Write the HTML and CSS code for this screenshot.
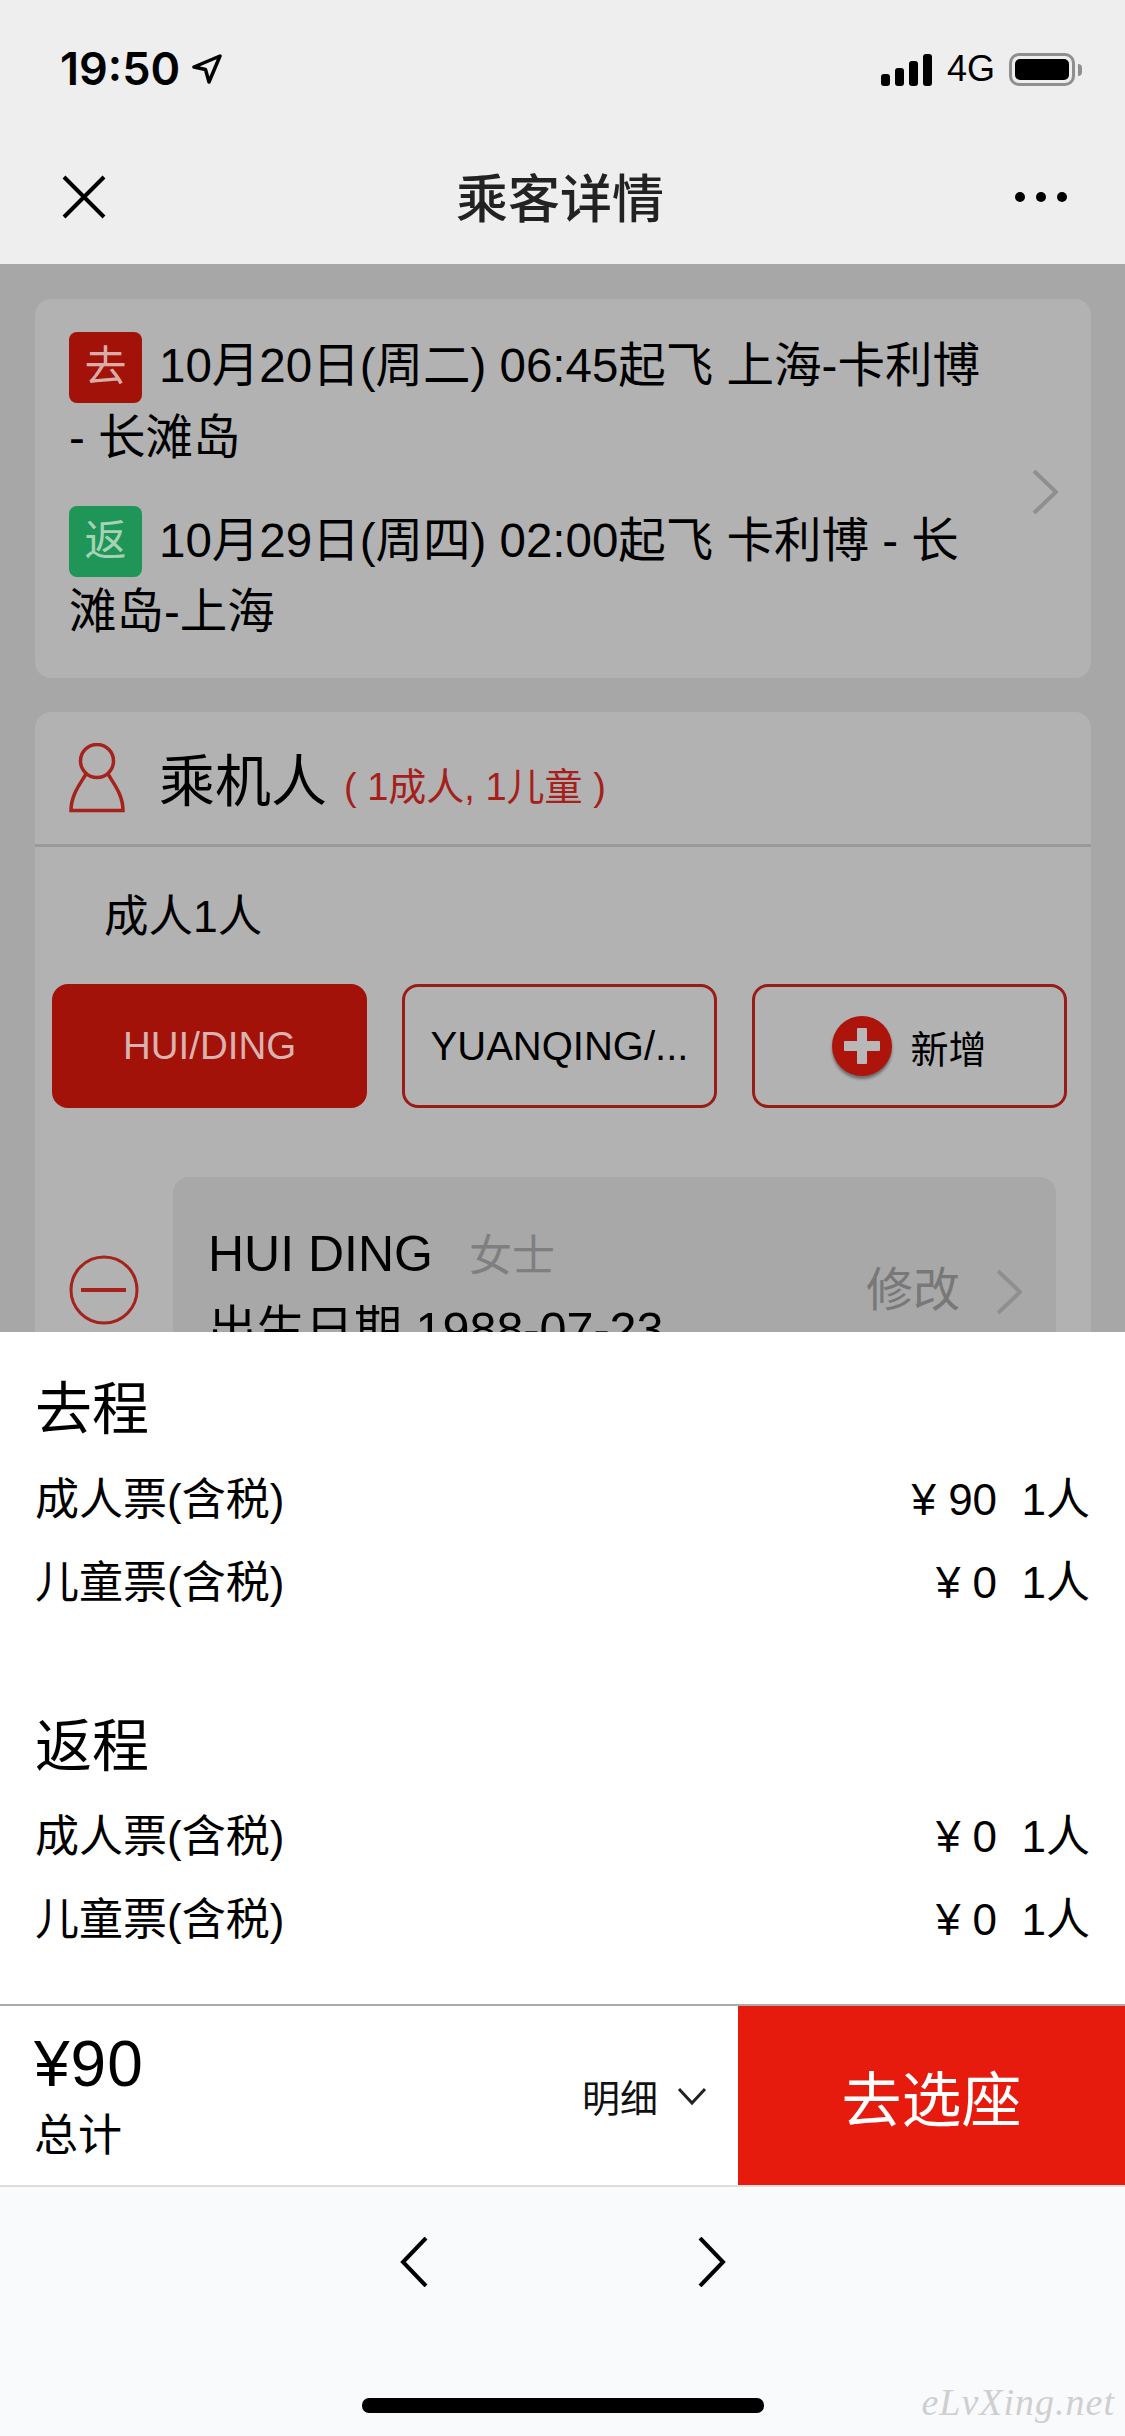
FILE: index.html
```html
<!DOCTYPE html>
<html lang="zh-CN">
<head>
  <meta charset="UTF-8">
  <meta name="viewport" content="width=device-width, initial-scale=1.0">
  <title>乘客详情</title>
  <link rel="stylesheet" href="styles.css">
</head>
<body>
  <div class="page">
    <!-- 状态栏和标题 -->
    <header class="top">
      <div class="status">
        <div class="status-left">
          <span class="time">19:50</span>
          <svg class="arrow" width="30" height="30" viewBox="0 0 30 30"><path d="M28 2 L2 13 L13.500 15.500 L17 28 Z" fill="none" stroke="#000" stroke-width="3.500" stroke-linejoin="round"/></svg>
        </div>
        <div class="status-right">
          <div class="signal"><i class="b1"></i><i class="b2"></i><i class="b3"></i><i class="b4"></i></div>
          <span class="net">4G</span>
          <div class="battery"><div class="battery-fill"></div></div>
          <div class="battery-nub"></div>
        </div>
      </div>
      <div class="nav">
        <svg class="close" width="44" height="44" viewBox="0 0 44 44"><path d="M2 2 L42 42 M42 2 L2 42" stroke="#000" stroke-width="4" fill="none"/></svg>
        <h1 class="title">乘客详情</h1>
        <div class="dots"><i></i><i></i><i></i></div>
      </div>
    </header>

    <!-- 遮罩下面的内容 -->
    <main class="dimmed">
      <section class="card trip">
        <div class="trip-text">
          <p><span class="tag tag-go">去</span>10月20日(周二) 06:45起飞 上海-卡利博<br>- 长滩岛</p>
          <p><span class="tag tag-back">返</span>10月29日(周四) 02:00起飞 卡利博 - 长<br>滩岛-上海</p>
        </div>
        <svg class="chev-grey trip-chev" width="26" height="44" viewBox="0 0 26 44"><path d="M2 1 L24 22 L2 43" fill="none" stroke="#8f8f8f" stroke-width="4"/></svg>
      </section>

      <section class="card people">
        <div class="people-head">
          <svg class="person" width="56" height="70" viewBox="0 0 56 70"><circle cx="28" cy="18" r="16.500" fill="none" stroke="#a5231c" stroke-width="3.500"/><path d="M17 31 C11 41 2 52 2 67.500 L54 67.500 C54 52 45 41 39 31" fill="none" stroke="#a5231c" stroke-width="3.500"/></svg>
          <h2 class="people-title">乘机人</h2>
          <span class="people-count">( 1成人, 1儿童 )</span>
        </div>
        <div class="adult-label">成人1人</div>
        <div class="picks">
          <div class="pick pick-on">HUI/DING</div>
          <div class="pick">YUANQING/...</div>
          <div class="pick pick-add"><span class="plus"></span>新增</div>
        </div>
        <div class="person-row">
          <svg class="minus" width="70" height="70" viewBox="0 0 70 70"><circle cx="35" cy="35" r="33" fill="none" stroke="#a5231c" stroke-width="3"/><path d="M12 35 L57 35" stroke="#a5231c" stroke-width="4"/></svg>
          <div class="person-box">
            <div class="person-info">
              <div class="person-name">HUI DING <span class="person-sex">女士</span></div>
              <div class="person-birth">出生日期 1988-07-23</div>
            </div>
            <span class="edit">修改</span>
            <svg class="chev-grey" width="26" height="44" viewBox="0 0 26 44"><path d="M2 1 L24 22 L2 43" fill="none" stroke="#8f8f8f" stroke-width="4"/></svg>
          </div>
        </div>
      </section>
    </main>

    <!-- 价格明细 -->
    <section class="sheet">
      <div class="fare-group">
        <h3>去程</h3>
        <div class="fare-row"><span>成人票(含税)</span><span>¥ 90&nbsp;&nbsp;1人</span></div>
        <div class="fare-row"><span>儿童票(含税)</span><span>¥ 0&nbsp;&nbsp;1人</span></div>
      </div>
      <div class="fare-group">
        <h3>返程</h3>
        <div class="fare-row"><span>成人票(含税)</span><span>¥ 0&nbsp;&nbsp;1人</span></div>
        <div class="fare-row"><span>儿童票(含税)</span><span>¥ 0&nbsp;&nbsp;1人</span></div>
      </div>
    </section>

    <section class="total-bar">
      <div class="total">
        <div class="total-price">¥90</div>
        <div class="total-label">总计</div>
      </div>
      <div class="detail">明细
        <svg width="30" height="20" viewBox="0 0 30 20"><path d="M2 3 L15 17 L28 3" fill="none" stroke="#222" stroke-width="3"/></svg>
      </div>
      <button class="go-btn" type="button">去选座</button>
    </section>

    <!-- 浏览器工具栏 -->
    <footer class="toolbar">
      <div class="toolbar-nav">
        <svg width="30" height="50" viewBox="0 0 30 50"><path d="M27 1 L4 25 L27 49" fill="none" stroke="#000" stroke-width="4"/></svg>
        <svg width="30" height="50" viewBox="0 0 30 50"><path d="M3 1 L26 25 L3 49" fill="none" stroke="#000" stroke-width="4"/></svg>
      </div>
      <div class="home-bar"></div>
      <span class="watermark">eLvXing.net</span>
    </footer>
  </div>
</body>
</html>
```

FILE: styles.css
```css
* {
  box-sizing: border-box;
}

body {
  margin: 0;
  font-family: "Liberation Sans", "Noto Sans CJK SC", sans-serif;
  color: #000;
}

h1, h2, h3, p {
  margin: 0;
  font-weight: normal;
}

.page {
  width: 1125px;
  height: 2436px;
  display: flex;
  flex-direction: column;
  overflow: hidden;
}

/* top */
.top {
  height: 264px;
  background-color: #eeeeee;
}

.status {
  height: 132px;
  padding: 46px 43px 0 60px;
  display: flex;
  justify-content: space-between;
  align-items: flex-start;
}

.status-left {
  display: flex;
  align-items: center;
  gap: 12px;
}

.time {
  font-family: Inter, sans-serif;
  font-size: 45px;
  font-weight: 600;
  line-height: 46px;
}

.status-right {
  display: flex;
  align-items: flex-end;
  height: 40px;
}

.signal {
  display: flex;
  align-items: flex-end;
  gap: 5px;
  margin-right: 15px;
}

.signal i {
  display: block;
  width: 9px;
  background-color: #000;
  border-radius: 3px;
}

.b1 { height: 12px; }
.b2 { height: 18px; }
.b3 { height: 25px; }
.b4 { height: 32px; }

.net {
  font-size: 36px;
  line-height: 34px;
  margin-right: 14px;
}

.battery {
  width: 66px;
  height: 33px;
  border: 3px solid #8f8f8f;
  border-radius: 10px;
  padding: 3px;
}

.battery-fill {
  width: 100%;
  height: 100%;
  background-color: #000;
  border-radius: 5px;
}

.battery-nub {
  width: 4px;
  height: 12px;
  margin: 0 0 10px 3px;
  background-color: #8f8f8f;
  border-radius: 0 6px 6px 0;
}

.nav {
  height: 132px;
  padding: 0 58px 2px 62px;
  display: grid;
  grid-template-columns: 1fr auto 1fr;
  align-items: center;
}

.title {
  font-size: 52px;
  font-weight: 500;
  color: #222;
  margin: -4px 0 0 -9px;
}

.dots {
  display: flex;
  justify-content: flex-end;
  gap: 11px;
}

.dots i {
  display: block;
  width: 10px;
  height: 10px;
  background-color: #000;
  border-radius: 50%;
}

/* dimmed content */
.dimmed {
  height: 1068px;
  flex: none;
  overflow: hidden;
  background-color: #a7a7a7;
  padding: 35px 34px 0 35px;
}

.card {
  background-color: #b2b2b2;
  border-radius: 16px;
}

.trip {
  height: 379px;
  padding: 33px 33px 0 34px;
  display: flex;
  align-items: center;
  justify-content: space-between;
  margin-bottom: 34px;
}

.trip-text {
  margin-top: -32px;
  font-size: 47.500px;
  line-height: 70px;
}

.trip-text p + p {
  margin-top: 33px;
}

.tag {
  display: inline-block;
  width: 73px;
  height: 71px;
  margin: -4px 17px 0 0;
  border-radius: 8px;
  font-size: 42px;
  line-height: 70px;
  text-align: center;
  vertical-align: middle;
}

.tag-go {
  background-color: #a21208;
  color: #d9aca8;
}

.tag-back {
  background-color: #1f9657;
  color: #a6d3b8;
}

.trip-chev {
  margin-top: -26px;
}

.people-head {
  height: 135px;
  padding: 0 0 0 34px;
  display: flex;
  align-items: center;
  border-bottom: 3px solid #999;
}

.people-title {
  font-size: 56px;
  margin: -4px 17px 0 34px;
}

.people-count {
  font-size: 38px;
  color: #a5201a;
  margin-top: 10px;
}

.adult-label {
  font-size: 44.500px;
  line-height: 60px;
  padding: 40px 0 0 69px;
}

.picks {
  display: grid;
  grid-template-columns: repeat(3, 315px);
  gap: 35px;
  padding: 37px 0 0 17px;
}

.pick {
  height: 124px;
  border: 3px solid #981d16;
  border-radius: 16px;
  display: flex;
  align-items: center;
  justify-content: center;
  font-size: 40px;
}

.pick-on {
  background-color: #a21208;
  border-color: #a21208;
  color: #d9b3b0;
  font-size: 38.500px;
}

.pick-add {
  font-size: 38px;
  gap: 18px;
}

.plus {
  position: relative;
  width: 60px;
  height: 60px;
  background-color: #ad150c;
  border-radius: 50%;
  box-shadow: 0 3px 3px rgba(0, 0, 0, 0.4);
}

.plus::before,
.plus::after {
  content: "";
  position: absolute;
  background-color: #b8b8b8;
  border-radius: 1px;
}

.plus::before {
  left: 12px;
  top: 25px;
  width: 36px;
  height: 10px;
}

.plus::after {
  left: 25px;
  top: 12px;
  width: 10px;
  height: 36px;
}

.person-row {
  display: flex;
  align-items: flex-start;
  padding: 69px 0 0 34px;
}

.minus {
  margin: 78px 35px 0 0;
  flex: none;
}

.person-box {
  width: 883px;
  height: 220px;
  background-color: #a8a8a8;
  border-radius: 16px;
  padding: 47px 34px 0 35px;
  display: flex;
  margin-left: -1px;
}

.person-info {
  flex: 1;
}

.person-name {
  font-size: 50px;
  line-height: 60px;
}

.person-sex {
  font-size: 43px;
  color: #7f7f7f;
  margin-left: 22px;
}

.person-birth {
  font-size: 48.500px;
  line-height: 60px;
  margin-top: 13px;
}

.edit {
  font-size: 47px;
  color: #787878;
  margin: 36px 36px 0 0;
  line-height: 60px;
}

.person-box .chev-grey {
  margin-top: 46px;
}

/* fare sheet */
.sheet {
  flex: none;
  height: 674px;
  background-color: #fff;
  padding: 41px 35px 0;
  border-bottom: 2px solid #aaa;
}

.fare-group {
  height: 337px;
}

.fare-group h3 {
  font-size: 57px;
  line-height: 72px;
}

.fare-row {
  display: flex;
  justify-content: space-between;
  font-size: 44px;
  line-height: 60px;
  margin-bottom: 23px;
}

.fare-group h3 + .fare-row {
  margin-top: 25px;
}

.total-bar {
  flex: none;
  height: 181px;
  display: flex;
  background-color: #fff;
  border-bottom: 2px solid #ddd;
}

.total {
  flex: 1;
  padding: 22px 0 0 34px;
}

.total-price {
  font-size: 64px;
  line-height: 72px;
  letter-spacing: 1px;
}

.total-label {
  font-size: 44px;
  line-height: 56px;
  margin-top: 8px;
}

.detail {
  display: flex;
  align-items: center;
  gap: 19px;
  width: 156px;
  font-size: 38px;
  color: #111;
}

.go-btn {
  width: 387px;
  background-color: #e61b0e;
  color: #fff;
  border: none;
  font-family: inherit;
  font-size: 60px;
}

/* toolbar */
.toolbar {
  position: relative;
  flex: 1;
  background-color: #f9fafc;
}

.toolbar-nav {
  display: flex;
  justify-content: center;
  gap: 268px;
  padding-top: 50px;
}

.home-bar {
  width: 402px;
  height: 15px;
  margin: 111px 0 0 362px;
  background-color: #000;
  border-radius: 7px;
}

/* watermark over the toolbar */
.watermark {
  position: absolute;
  right: 10px;
  bottom: 12px;
  font-family: "Liberation Serif", serif;
  font-style: italic;
  font-size: 38px;
  letter-spacing: 1px;
  color: #cfcfcf;
}
```
